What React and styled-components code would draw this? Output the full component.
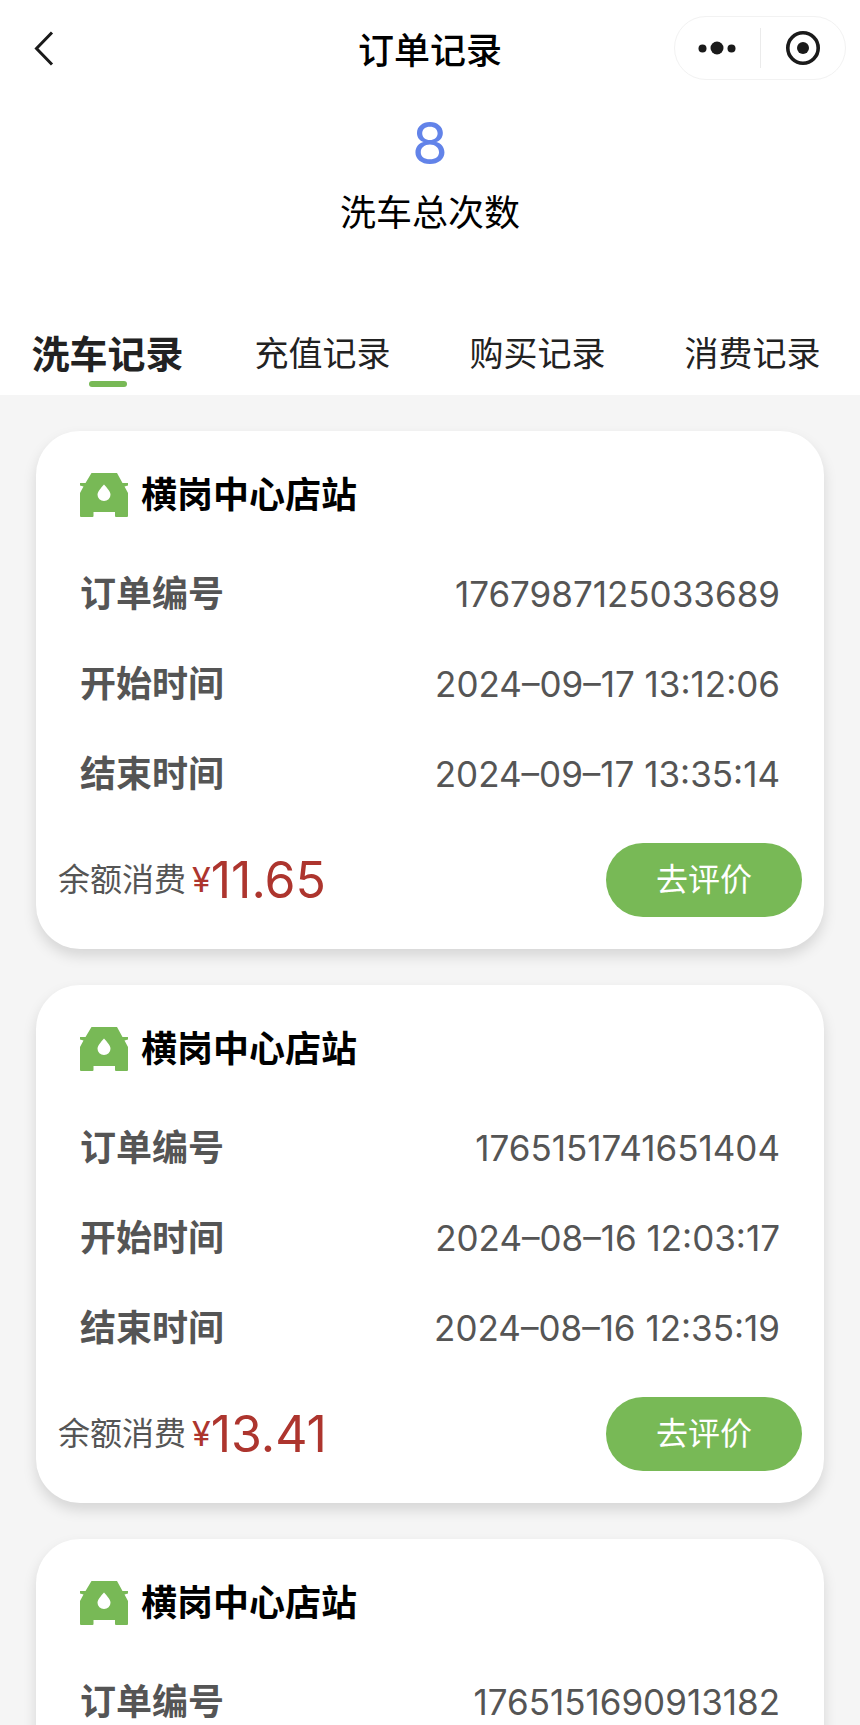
import { useState } from 'react';
import styled, { createGlobalStyle } from 'styled-components';

const GlobalStyle = createGlobalStyle`
  * {
    box-sizing: border-box;
  }
  body {
    margin: 0;
    background-color: #f5f5f5;
    color: #000;
    font-family: Inter, "Noto Sans CJK SC", sans-serif;
  }
  button {
    border: none;
    padding: 0;
    background: none;
    color: inherit;
    font-family: inherit;
    cursor: pointer;
  }
`

const Page = styled.div`
  height: 100vh;
  overflow-y: auto;
  scrollbar-width: none;
  &::-webkit-scrollbar {
    display: none;
  }
`
const Header = styled.header`
  background-color: #fff;
  font-family: "Noto Sans CJK SC", sans-serif;
`
const NavBar = styled.div`
  display: grid;
  grid-template-columns: 1fr auto 1fr;
  align-items: center;
  height: 96px;
  padding: 0 14px;
`
const BackButton = styled.button`
  justify-self: start;
  display: flex;
  padding: 12px 16px;
`
const Title = styled.h1`
  margin: 0;
  font-size: 36px;
  line-height: 48px;
  font-weight: 500;
`
const Capsule = styled.div`
  justify-self: end;
  display: flex;
  align-items: center;
  width: 172px;
  height: 64px;
  border: 1px solid #f2f2f2;
  border-radius: 32px;
`
const CapsuleButton = styled.button`
  flex: 1;
  display: flex;
  align-items: center;
  justify-content: center;
  height: 40px;
  & + & {
    border-left: 1px solid #ebebeb;
  }
`
const Summary = styled.div`
  display: flex;
  flex-direction: column;
  align-items: center;
  padding: 10px 0 83px;
`
const Count = styled.div`
  color: #6283e9;
  font-family: Inter, sans-serif;
  font-size: 58px;
  line-height: 74px;
`
const CountLabel = styled.div`
  font-size: 36px;
  line-height: 60px;
`
const Tabs = styled.div`
  display: flex;
  height: 72px;
`
const Tab = styled.button`
  flex: 1;
  display: flex;
  flex-direction: column;
  align-items: center;
  color: #222;
  font-size: ${(props) => (props.$active ? '38px' : '34px')};
  font-weight: ${(props) => (props.$active ? 700 : 400)};
  line-height: 58px;
  &::after {
    content: "";
    width: 38px;
    height: 6px;
    border-radius: 3px;
    background-color: ${(props) => (props.$active ? '#78b956' : 'transparent')};
  }
`
const List = styled.main`
  display: flex;
  flex-direction: column;
  gap: 36px;
  padding: 36px;
`
const Card = styled.article`
  padding: 20px 22px 32px;
  border-radius: 44px;
  background-color: #fff;
  box-shadow: 0 7px 14px rgba(0, 0, 0, 0.13);
`
const Station = styled.h2`
  display: flex;
  align-items: center;
  gap: 13px;
  height: 88px;
  margin: 0;
  padding: 0 22px;
  font-size: 36px;
  line-height: 48px;
  font-weight: 700;
`
const Fields = styled.dl`
  margin: 0 0 24px;
  padding: 10px 22px 0;
  color: #555;
`
const Field = styled.div`
  display: flex;
  align-items: center;
  justify-content: space-between;
  height: 90px;
  line-height: 48px;
  dt {
    font-size: 36px;
    font-weight: 700;
  }
  dd {
    margin: 0;
    font-size: 35px;
  }
`
const Footer = styled.div`
  display: flex;
  align-items: center;
  justify-content: space-between;
`
const Cost = styled.div`
  display: flex;
  align-items: center;
  color: #555;
  font-size: 32px;
  line-height: 74px;
`
const Price = styled.div`
  display: flex;
  align-items: center;
  margin-left: 6px;
  color: #ad352e;
  font-size: 50px;
  span {
    font-size: 34px;
  }
`
const ReviewButton = styled.button`
  width: 196px;
  height: 74px;
  border-radius: 37px;
  background-color: #78b956;
  color: #fff;
  font-size: 32px;
  line-height: 74px;
`

const tabs = ['洗车记录', '充值记录', '购买记录', '消费记录']

const records = [
  {
    station: '横岗中心店站',
    fields: [
      ['订单编号', '1767987125033689'],
      ['开始时间', '2024–09–17 13:12:06'],
      ['结束时间', '2024–09–17 13:35:14'],
    ],
    cost: '11.65',
  },
  {
    station: '横岗中心店站',
    fields: [
      ['订单编号', '1765151741651404'],
      ['开始时间', '2024–08–16 12:03:17'],
      ['结束时间', '2024–08–16 12:35:19'],
    ],
    cost: '13.41',
  },
  {
    station: '横岗中心店站',
    fields: [['订单编号', '1765151690913182']],
  },
]

const BackIcon = () => (
  <svg width="30" height="40" viewBox="0 0 30 40" fill="none" stroke="#1a1a1a" strokeWidth="3">
    <path d="M22 4.500 L6.500 20.500 L22 36.500" />
  </svg>
)

const MoreIcon = () => (
  <svg width="38" height="16" viewBox="0 0 38 16" fill="#1a1a1a">
    <circle cx="4.500" cy="8.500" r="4" />
    <circle cx="19" cy="8" r="6.500" />
    <circle cx="33.500" cy="8.500" r="4" />
  </svg>
)

const CloseIcon = () => (
  <svg width="36" height="36" viewBox="0 0 36 36">
    <circle cx="18" cy="18" r="15.200" fill="none" stroke="#1a1a1a" strokeWidth="3.600" />
    <circle cx="18" cy="18" r="6" fill="#1a1a1a" />
  </svg>
)

const CarIcon = () => (
  <svg width="48" height="44" viewBox="0 0 48 44">
    <path
      fill="#78b956"
      d="M11.500 0 H37 L42.500 10 H48 V12.500 L44.500 13.500 L48 20 V43 Q48 44 47 44 H36 Q35 44 35 43 V39 H13.500 V43 Q13.500 44 12.500 44 H1 Q0 44 0 43 V20 L3.500 13.500 L0 12.500 V10 H5.500 Z"
    />
    <path fill="#fff" d="M24 11.500 C27 15 30.500 18.500 30.500 21.800 A6.500 6.200 0 0 1 17.500 21.800 C17.500 18.500 21 15 24 11.500 Z" />
  </svg>
)

const RecordCard = ({ record }) => {
  return (
    <Card>
      <Station>
        <CarIcon />
        {record.station}
      </Station>
      <Fields>
        {record.fields.map(([label, value]) => (
          <Field key={label}>
            <dt>{label}</dt>
            <dd>{value}</dd>
          </Field>
        ))}
      </Fields>
      {record.cost && (
        <Footer>
          <Cost>
            余额消费
            <Price><span>¥</span>{record.cost}</Price>
          </Cost>
          <ReviewButton type="button">去评价</ReviewButton>
        </Footer>
      )}
    </Card>
  )
}

const App = () => {
  const [active, setActive] = useState(0)

  return (
    <Page>
      <GlobalStyle />
      <Header>
        <NavBar>
          <BackButton type="button" aria-label="返回"><BackIcon /></BackButton>
          <Title>订单记录</Title>
          <Capsule>
            <CapsuleButton type="button" aria-label="更多"><MoreIcon /></CapsuleButton>
            <CapsuleButton type="button" aria-label="关闭"><CloseIcon /></CapsuleButton>
          </Capsule>
        </NavBar>
        <Summary>
          <Count>8</Count>
          <CountLabel>洗车总次数</CountLabel>
        </Summary>
        <Tabs role="tablist">
          {tabs.map((tab, i) => (
            <Tab
              key={tab}
              type="button"
              role="tab"
              aria-selected={i === active}
              $active={i === active}
              onClick={() => setActive(i)}
            >
              {tab}
            </Tab>
          ))}
        </Tabs>
      </Header>
      <List>
        {records.map((record) => (
          <RecordCard key={record.fields[0][1]} record={record} />
        ))}
      </List>
    </Page>
  )
}

export default App
